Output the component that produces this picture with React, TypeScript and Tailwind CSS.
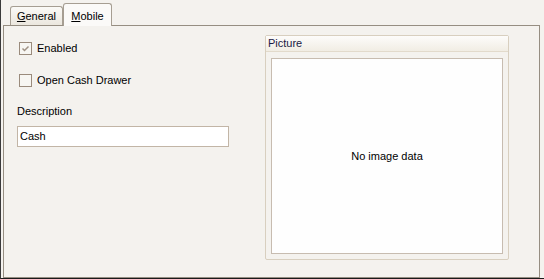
import React from 'react';

function CheckBox({ label, checked }: { label: string; checked?: boolean }) {
  return (
    <div className="flex h-[13px] items-center">
      <div className="ml-[2px] flex h-[13px] w-[13px] items-center justify-center border border-[#9a8b7c] bg-[#f7f6f2]">
        {checked && (
          <svg width="9" height="9" viewBox="0 0 9 9">
            <path d="M1.5 4.5 L3.5 6.5 L7.5 2.5" fill="none" stroke="#a09284" strokeWidth="1.5" />
          </svg>
        )}
      </div>
      <span className="ml-[5px] text-[11px] leading-[13px] text-black">{label}</span>
    </div>
  );
}

export default function App() {
  return (
    <div
      className="flex h-[279px] w-[544px] flex-col border-b border-l border-b-[#1a1a1a] border-l-[#3a3a3a] bg-[#f4f2ee]"
      style={{ fontFamily: '"Liberation Sans", Arial, sans-serif' }}
    >
      {/* tab strip */}
      <div className="flex h-[25px] items-end pl-[9px]">
        <div className="flex h-[19px] w-[53px] items-center justify-center rounded-t-[3px] border border-b-0 border-[#a69e92] bg-gradient-to-b from-[#fbfaf7] to-[#ebe7de] text-[11px] text-black">
          <span>
            <span className="underline">G</span>eneral
          </span>
        </div>
        <div className="relative z-10 -mb-px flex h-[23px] w-[49px] items-start justify-center rounded-t-[3px] border border-b-0 border-[#a69e92] bg-[#fbfaf8] pt-[4px] text-[11px] text-black">
          <span>
            <span className="underline">M</span>obile
          </span>
        </div>
      </div>

      {/* tab page */}
      <div className="ml-[2px] flex h-[253px] w-[537px] border border-[#968e82] bg-[#f4f2ee]">
        <div className="flex w-[225px] shrink-0 flex-col pl-[13px] pt-[16px]">
          <CheckBox label="Enabled" checked />
          <div className="mt-[19px]">
            <CheckBox label="Open Cash Drawer" />
          </div>
          <div className="mt-[18px] text-[11px] leading-[13px] text-black">Description</div>
          <div className="mt-[8px] flex h-[21px] w-[212px] items-center border border-[#c2b5a6] bg-white pl-[2px] text-[11px] text-black">
            Cash
          </div>
        </div>

        <div className="ml-[36px] mt-[9px] flex h-[225px] w-[244px] flex-col rounded-[2px] border border-[#d8cfbf]">
          <div className="flex h-[16px] items-center border-b border-[#e2dacb] bg-gradient-to-b from-[#fdfcfa] to-[#f1ede4] pl-[2px] text-[11px] text-[#1a1a44]">
            Picture
          </div>
          <div className="ml-[5px] mt-[6px] flex h-[196px] w-[232px] items-center justify-center border border-[#c7bcb0] bg-[#fefefe] text-[11px] text-black">
            No image data
          </div>
        </div>
      </div>
    </div>
  );
}
